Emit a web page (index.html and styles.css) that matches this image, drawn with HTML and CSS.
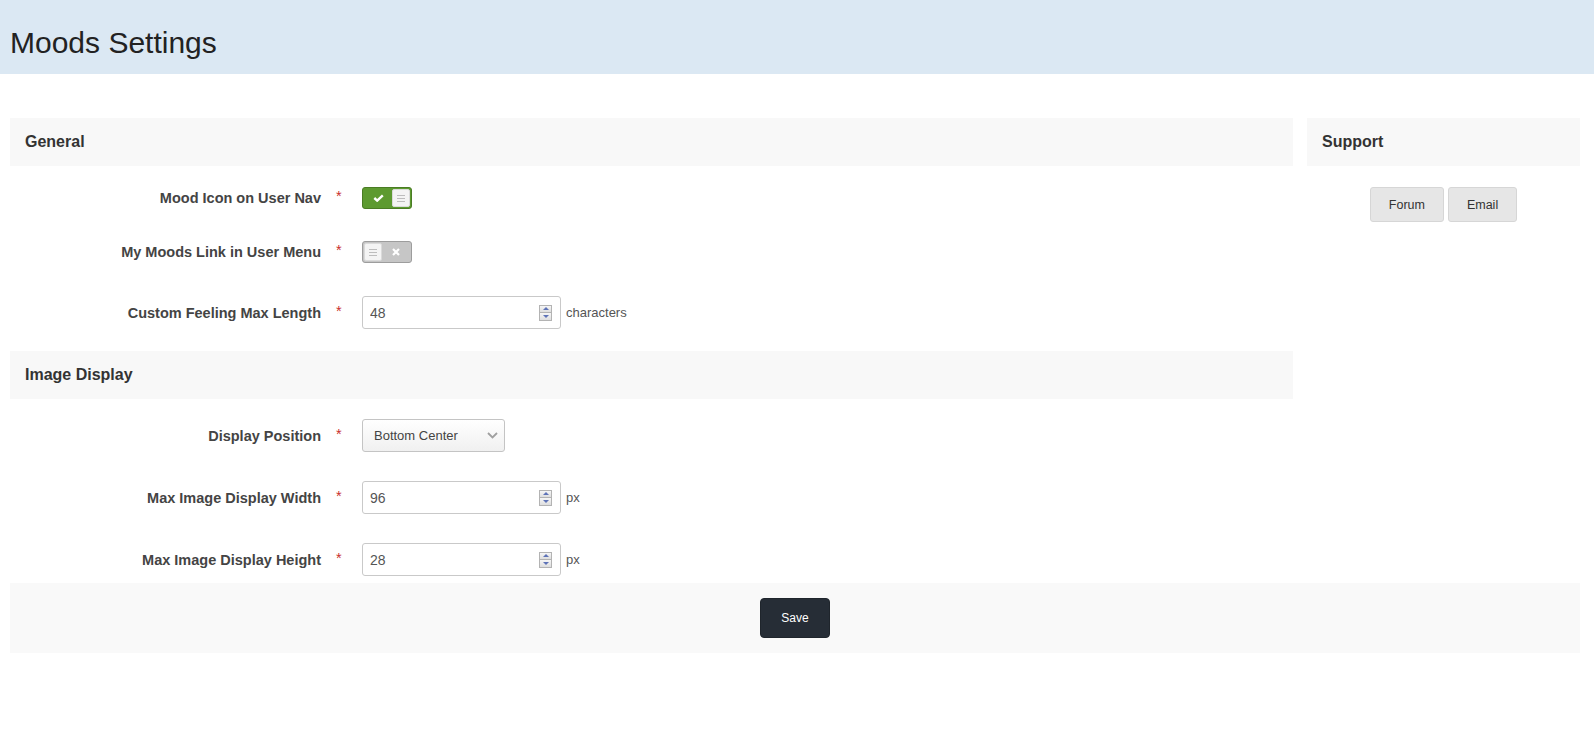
FILE: index.html
```html
<!DOCTYPE html>
<html lang="en">
<head>
<meta charset="utf-8">
<title>Moods Settings</title>
<link rel="stylesheet" href="styles.css">
</head>
<body>
<header class="page-header">
  <h1 class="page-title">Moods Settings</h1>
</header>

<form class="page">
  <div class="columns">
    <div class="main-col">
      <section class="panel">
        <h2 class="panel-head">General</h2>
        <div class="panel-body panel-body--general">
          <div class="field field--toggle">
            <label class="field-label">Mood Icon on User Nav</label>
            <div class="control">
              <span class="req">*</span>
              <span class="toggle toggle--on">
                <span class="toggle-icon">
                  <svg width="11" height="8" viewBox="0 0 11 8"><polyline points="1.3,4 4.2,6.6 9.8,1.3" fill="none" stroke="#fff" stroke-width="2.4"/></svg>
                </span>
                <span class="knob"><i></i><i></i><i></i></span>
              </span>
            </div>
          </div>

          <div class="field field--toggle field--toggle-last">
            <label class="field-label">My Moods Link in User Menu</label>
            <div class="control">
              <span class="req">*</span>
              <span class="toggle toggle--off">
                <span class="knob"><i></i><i></i><i></i></span>
                <span class="toggle-icon">
                  <svg width="8" height="8" viewBox="0 0 8 8"><path d="M1 1L7 7M7 1L1 7" stroke="#fff" stroke-width="2.2"/></svg>
                </span>
              </span>
            </div>
          </div>

          <div class="field">
            <label class="field-label">Custom Feeling Max Length</label>
            <div class="control">
              <span class="req">*</span>
              <span class="num">
                <input type="text" value="48">
                <span class="spin"><span class="spin-btn spin-btn--up"></span><span class="spin-btn spin-btn--down"></span></span>
              </span>
              <span class="unit">characters</span>
            </div>
          </div>
        </div>
      </section>

      <section class="panel">
        <h2 class="panel-head">Image Display</h2>
        <div class="panel-body panel-body--image">
          <div class="field">
            <label class="field-label">Display Position</label>
            <div class="control">
              <span class="req">*</span>
              <span class="select">
                <span class="select-text">Bottom Center</span>
                <svg class="select-arrow" width="11" height="7" viewBox="0 0 11 7"><polyline points="1,1 5.5,5.5 10,1" fill="none" stroke="#a0a0a0" stroke-width="1.8"/></svg>
              </span>
            </div>
          </div>

          <div class="field">
            <label class="field-label">Max Image Display Width</label>
            <div class="control">
              <span class="req">*</span>
              <span class="num">
                <input type="text" value="96">
                <span class="spin"><span class="spin-btn spin-btn--up"></span><span class="spin-btn spin-btn--down"></span></span>
              </span>
              <span class="unit">px</span>
            </div>
          </div>

          <div class="field">
            <label class="field-label">Max Image Display Height</label>
            <div class="control">
              <span class="req">*</span>
              <span class="num">
                <input type="text" value="28">
                <span class="spin"><span class="spin-btn spin-btn--up"></span><span class="spin-btn spin-btn--down"></span></span>
              </span>
              <span class="unit">px</span>
            </div>
          </div>
        </div>
      </section>
    </div>

    <aside class="side-col">
      <section class="panel">
        <h2 class="panel-head">Support</h2>
        <div class="support-body">
          <button type="button" class="btn">Forum</button>
          <button type="button" class="btn">Email</button>
        </div>
      </section>
    </aside>
  </div>

  <div class="form-footer">
    <button type="button" class="btn-save">Save</button>
  </div>
</form>
</body>
</html>
```

FILE: styles.css
```css
html, body {
  margin: 0;
  padding: 0;
  background: #fff;
}

body {
  font-family: "Liberation Sans", Arial, sans-serif;
  color: #333;
}

.page-header {
  height: 74px;
  box-sizing: border-box;
  padding: 28px 0 0 10px;
  background: #dbe8f3;
}

.page-title {
  margin: 0;
  font-size: 30px;
  line-height: 30px;
  font-weight: normal;
  color: #222;
}

.page {
  margin: 0;
  padding: 44px 14px 0 10px;
}

.columns {
  display: grid;
  grid-template-columns: 1fr 273px;
  column-gap: 14px;
}

.panel-head {
  margin: 0;
  height: 48px;
  display: flex;
  align-items: center;
  padding-left: 15px;
  background: #f8f8f8;
  font-size: 16px;
  font-weight: bold;
  color: #333;
}

.panel-body--general {
  padding: 21px 0 22px;
}

.panel-body--image {
  padding: 20px 0 7px;
}

.field {
  display: flex;
  align-items: center;
  margin-bottom: 29px;
}

.field:last-child {
  margin-bottom: 0;
}

.field--toggle {
  margin-bottom: 32px;
}

.field--toggle-last {
  margin-bottom: 33px;
}

.field-label {
  width: 311px;
  flex: none;
  text-align: right;
  font-size: 14.5px;
  line-height: 20px;
  font-weight: bold;
  color: #444;
}

.control {
  display: flex;
  align-items: center;
}

.req {
  width: 41px;
  box-sizing: border-box;
  padding-left: 15px;
  font-size: 14.5px;
  line-height: 14px;
  margin-bottom: 4px;
  color: #c9302c;
}

/* toggles */
.toggle {
  display: flex;
  align-items: center;
  width: 50px;
  height: 22px;
  box-sizing: border-box;
  padding: 1px;
  border-radius: 3px;
  border: 1px solid;
}

.toggle--on {
  background: #5d9a30;
  border-color: #4a7c24;
}

.toggle--off {
  background: #c6c6c6;
  border-color: #9d9d9d;
}

.toggle-icon {
  flex: 1;
  display: flex;
  align-items: center;
  justify-content: center;
}

.knob {
  width: 18px;
  height: 18px;
  box-sizing: border-box;
  border-radius: 2px;
  background: #f4f4f4;
  border: 1px solid #dadada;
  display: flex;
  flex-direction: column;
  align-items: center;
  justify-content: center;
  gap: 2px;
}

.knob i {
  display: block;
  width: 8px;
  height: 1px;
  background: #bdbdbd;
}

/* number inputs */
.num {
  display: flex;
  align-items: center;
  width: 199px;
  height: 33px;
  box-sizing: border-box;
  padding: 0 8px 0 7px;
  border: 1px solid #c9c9c9;
  border-radius: 3px;
  background: #fff;
}

.num input {
  flex: 1;
  min-width: 0;
  border: 0;
  outline: 0;
  padding: 0;
  margin: 0;
  background: transparent;
  font-family: "Liberation Sans", Arial, sans-serif;
  font-size: 14px;
  color: #555;
}

.spin {
  display: flex;
  flex-direction: column;
  width: 13px;
  height: 16px;
  flex: none;
}

.spin-btn {
  flex: 1;
  display: flex;
  align-items: center;
  justify-content: center;
  border: 1px solid #b3b3b3;
  background: linear-gradient(#f6f6f6, #dedede);
}

.spin-btn--down {
  border-top: 0;
}

.spin-btn--up::after {
  content: "";
  border-left: 3px solid transparent;
  border-right: 3px solid transparent;
  border-bottom: 3px solid #5e73b7;
}

.spin-btn--down::after {
  content: "";
  border-left: 3px solid transparent;
  border-right: 3px solid transparent;
  border-top: 3px solid #5e73b7;
}

.unit {
  margin-left: 5px;
  font-size: 13px;
  color: #555;
}

/* select */
.select {
  display: flex;
  align-items: center;
  width: 143px;
  height: 33px;
  box-sizing: border-box;
  padding: 0 6px 0 11px;
  border: 1px solid #c4c4c4;
  border-radius: 3px;
  background: linear-gradient(#ffffff, #f0f0f0);
  font-size: 13px;
  color: #444;
}

.select-arrow {
  margin-left: auto;
}

/* support */
.support-body {
  display: flex;
  justify-content: center;
  gap: 4px;
  padding-top: 21px;
}

.btn {
  height: 35px;
  padding: 0 18px;
  border: 1px solid #d6d6d6;
  border-radius: 3px;
  background: #e6e6e6;
  font-family: "Liberation Sans", Arial, sans-serif;
  font-size: 12.5px;
  color: #333;
}

/* footer */
.form-footer {
  height: 70px;
  display: flex;
  align-items: center;
  justify-content: center;
  background: #f9f9f9;
}

.btn-save {
  width: 70px;
  height: 40px;
  border: 1px solid #1f252c;
  border-radius: 4px;
  background: #262d36;
  color: #fff;
  font-family: "Liberation Sans", Arial, sans-serif;
  font-size: 12px;
}
```
